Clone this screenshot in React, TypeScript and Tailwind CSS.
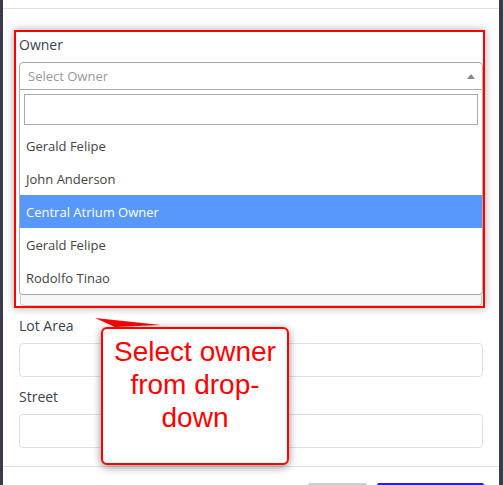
import React from 'react'

const owners = ['Gerald Felipe', 'John Anderson', 'Central Atrium Owner', 'Gerald Felipe', 'Rodolfo Tinao']

export default function App() {
  return (
    <div className="w-[503px] h-[485px] bg-[#3c3b49] flex overflow-hidden" style={{ fontFamily: '"Open Sans", sans-serif' }}>
      <div className="ml-[3px] w-[496px] h-full bg-white relative flex flex-col">
        <div className="h-[9px] shrink-0 border-b border-[#dee2e6]" />

        <div className="px-4 pt-[25px] flex-1">
          {/* owner field */}
          <div className="relative">
            <label className="block text-[14px] leading-[21px] text-[#3b4150] mb-[7px]">Owner</label>
            <div className="h-[28px] border border-[#aaa] rounded-t-[4px] flex items-center justify-between pl-[8px] pr-[7px]">
              <span className="text-[13px] text-[#999] translate-y-px">Select Owner</span>
              <span className="w-0 h-0 border-x-[4px] border-x-transparent border-b-[5px] border-b-[#888]" />
            </div>
            <div className="border-x border-b border-[#aaa] rounded-b-[4px] bg-white">
              <div className="p-[4px]">
                <div className="h-[31px] border border-[#aaa]" />
              </div>
              <ul>
                {owners.map((o, i) => (
                  <li
                    key={i}
                    className={`h-[33px] flex items-center px-[6px] text-[13px] ${i === 2 ? 'bg-[#5897fb] text-white' : 'text-[#444]'}`}
                  >
                    <span className="translate-y-px">{o}</span>
                  </li>
                ))}
              </ul>
            </div>
            <div className="h-[11px] mx-px border-x border-b border-[#ccc] rounded-b-[4px] bg-[#f7f7f7]" />
            <div className="absolute -left-[5px] -top-[4px] w-[471px] h-[278px] border-2 border-[#ff0000] shadow-[0_0_8px_rgba(0,0,0,0.35)] pointer-events-none" />
          </div>

          <div className="mt-[9px]">
            <label className="block text-[14px] leading-[21px] text-[#3b4150] mb-[7px]">Lot Area</label>
            <div className="h-[34px] border border-[#dcdfe4] rounded-[4px]" />
          </div>
          <div className="mt-[9px]">
            <label className="block text-[14px] leading-[21px] text-[#3b4150] mb-[7px]">Street</label>
            <div className="h-[34px] border border-[#dcdfe4] rounded-[4px]" />
          </div>
        </div>

        <div className="h-[19px] shrink-0 border-t border-[#dee2e6] flex justify-end items-end gap-[10px] pr-[15px]">
          <div className="w-[59px] h-[2px] rounded-t-[4px] bg-[#ccd0d5]" />
          <div className="w-[107px] h-[2px] rounded-t-[4px] bg-[#2c1ed6]" />
        </div>

        {/* callout annotation */}
        <svg className="absolute left-0 top-0 pointer-events-none" width="496" height="485">
          <polygon points="92,318 158,325 112,327" fill="#ff0000" />
        </svg>
        <div className="absolute left-[98px] top-[327px] w-[188px] h-[138px] bg-white border-2 border-[#ff0000] rounded-[6px] shadow-[0_2px_8px_rgba(0,0,0,0.45)] pt-[6px] text-center text-[#ff0000] text-[28px] leading-[33px]" style={{ fontFamily: '"Liberation Sans", Arial, sans-serif' }}>
          Select owner<br />from drop-<br />down
        </div>
      </div>
    </div>
  )
}
